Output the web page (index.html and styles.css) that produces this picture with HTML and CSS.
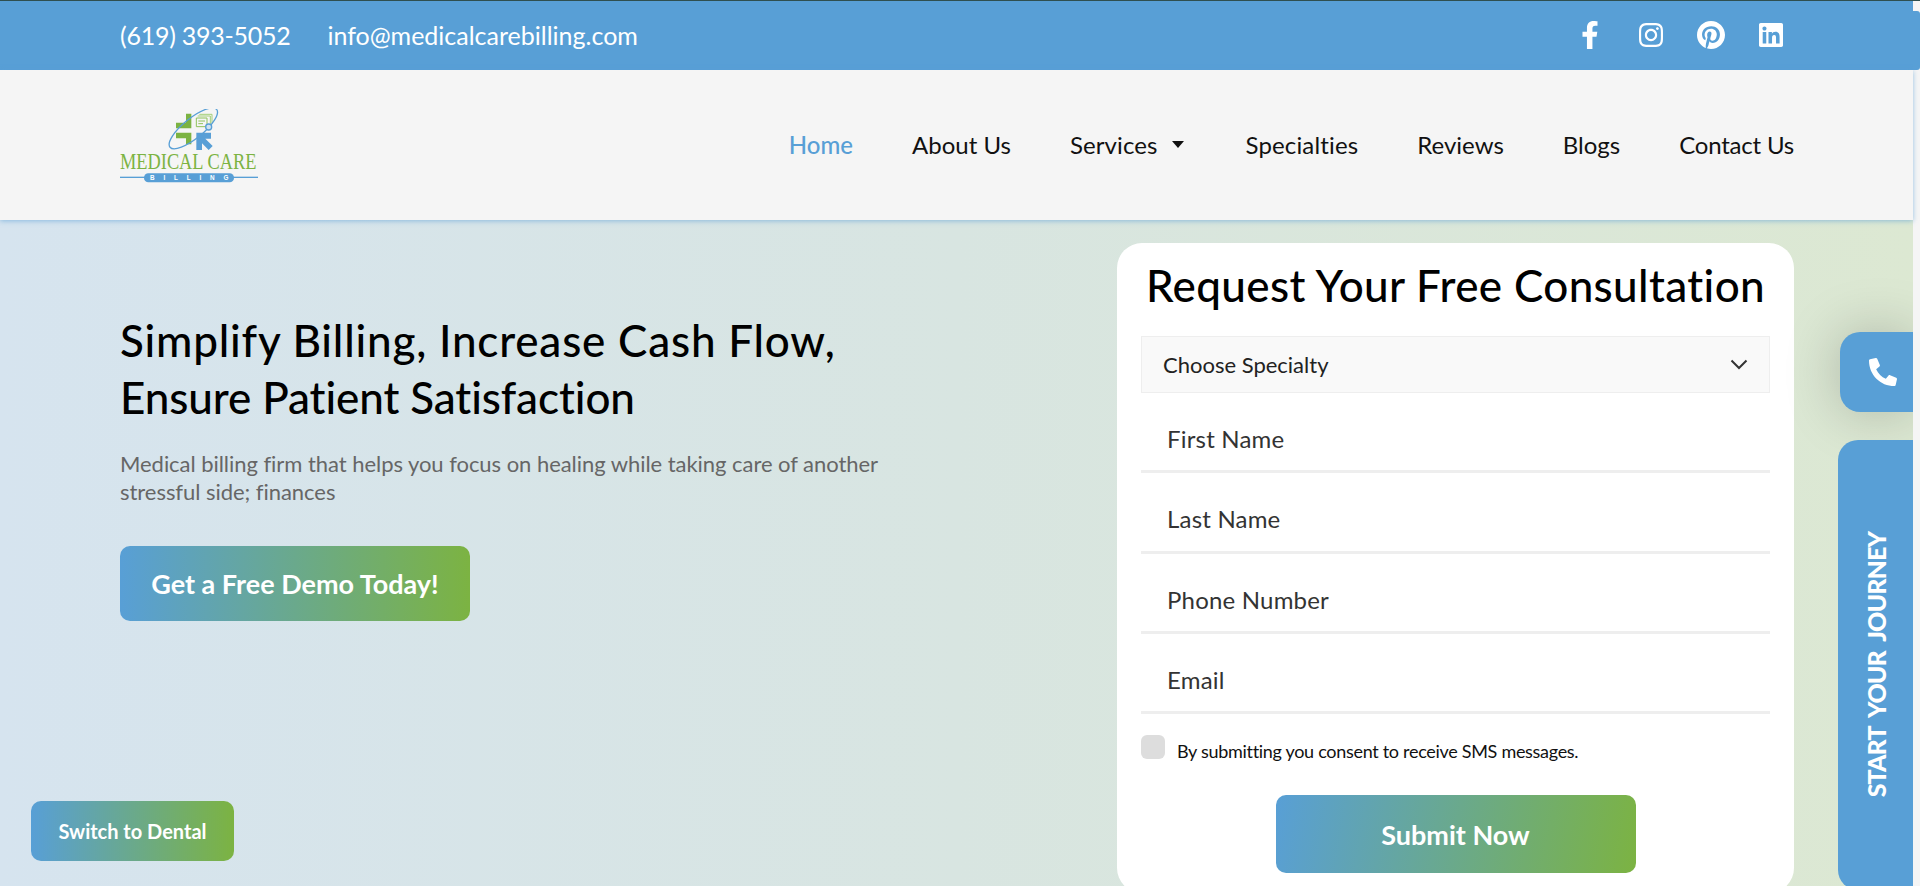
FILE: index.html
```html
<!DOCTYPE html>
<html lang="en">
<head>
    <meta charset="UTF-8">
    <meta name="viewport" content="width=device-width, initial-scale=1.0">
    <title>Medical Care Billing</title>
    <link rel="stylesheet" href="styles.css">
</head>
<body>
    <div class="page">
        <div class="topbar">
            <div class="contact">
                <a href="#" class="phone-link">(619) 393-5052</a>
                <a href="#">info@medicalcarebilling.com</a>
            </div>
            <div class="social">
                <svg class="icon-fb" viewBox="0 0 320 512"><path d="M279.14 288l14.22-92.66h-88.91v-60.13c0-25.35 12.42-50.06 52.24-50.06h40.42V6.26S260.43 0 225.36 0c-73.22 0-121.08 44.38-121.08 124.72v70.62H22.89V288h81.39v224h100.17V288z"/></svg>
                <svg class="icon-ig" viewBox="0 0 448 448"><path transform="translate(0 -32)" d="M224.1 141c-63.6 0-114.9 51.3-114.9 114.9s51.3 114.9 114.9 114.9S339 319.5 339 255.9 287.7 141 224.1 141zm0 189.6c-41.1 0-74.7-33.5-74.7-74.7s33.5-74.7 74.7-74.7 74.7 33.5 74.7 74.7-33.6 74.7-74.7 74.7zm146.4-194.3c0 14.9-12 26.8-26.8 26.8-14.9 0-26.8-12-26.8-26.8s12-26.8 26.8-26.8 26.8 12 26.8 26.8zm76.1 27.2c-1.7-35.9-9.9-67.7-36.2-93.9-26.2-26.2-58-34.4-93.9-36.2-37-2.1-147.9-2.1-184.9 0-35.8 1.7-67.6 9.9-93.9 36.1s-34.4 58-36.2 93.9c-2.1 37-2.1 147.9 0 184.9 1.7 35.9 9.9 67.7 36.2 93.9s58 34.4 93.9 36.2c37 2.1 147.9 2.1 184.9 0 35.9-1.7 67.7-9.9 93.9-36.2 26.2-26.2 34.4-58 36.2-93.9 2.1-37 2.1-147.8 0-184.8zM398.8 388c-7.8 19.6-22.9 34.7-42.6 42.6-29.5 11.7-99.5 9-132.1 9s-102.7 2.6-132.1-9c-19.6-7.8-34.7-22.9-42.6-42.6-11.7-29.5-9-99.5-9-132.1s-2.6-102.7 9-132.1c7.8-19.6 22.9-34.7 42.6-42.6 29.5-11.7 99.5-9 132.1-9s102.7-2.6 132.1 9c19.6 7.8 34.7 22.9 42.6 42.6 11.7 29.5 9 99.5 9 132.1s2.7 102.7-9 132.1z"/></svg>
                <svg class="icon-pin" viewBox="0 0 496 496"><path transform="translate(0 -8)" d="M496 256c0 137-111 248-248 248-25.6 0-50.2-3.9-73.4-11.1 10.1-16.5 25.2-43.5 30.8-65 3-11.6 15.4-59 15.4-59 8.1 15.4 31.7 28.5 56.8 28.5 74.8 0 128.7-68.8 128.7-154.3 0-81.9-66.9-143.2-152.9-143.2-107 0-163.9 71.8-163.9 150.1 0 36.4 19.4 81.7 50.3 96.1 4.7 2.2 7.2 1.2 8.3-3.3.8-3.4 5-20.3 6.9-28.1.6-2.5.3-4.7-1.7-7.1-10.1-12.5-18.3-35.3-18.3-56.6 0-54.7 41.4-107.6 112-107.6 60.9 0 103.6 41.5 103.6 100.9 0 67.1-33.9 113.6-78 113.6-24.3 0-42.6-20.1-36.7-44.8 7-29.5 20.5-61.3 20.5-82.6 0-19-10.2-34.9-31.4-34.9-24.9 0-44.9 25.7-44.9 60.2 0 22 7.4 36.8 7.4 36.8s-24.5 103.8-29 123.2c-5 21.4-3 51.6-.9 71.2C65.4 450.9 0 361.1 0 256 0 119 111 8 248 8s248 111 248 248z"/></svg>
                <svg class="icon-in" viewBox="0 0 448 448"><path transform="translate(0 -32)" d="M416 32H31.9C14.3 32 0 46.5 0 64.3v383.4C0 465.5 14.3 480 31.9 480H416c17.6 0 32-14.5 32-32.3V64.3c0-17.8-14.4-32.3-32-32.3zM135.4 416H69V202.2h66.5V416zm-33.2-243c-21.3 0-38.5-17.3-38.5-38.5S80.9 96 102.2 96c21.2 0 38.5 17.3 38.5 38.5 0 21.3-17.2 38.5-38.5 38.5zm282.1 243h-66.4V312c0-24.8-.5-56.7-34.5-56.7-34.6 0-39.9 27-39.9 54.9V416h-66.4V202.2h63.7v29.2h.9c8.9-16.8 30.6-34.5 62.9-34.5 67.2 0 79.7 44.3 79.7 101.9V416z"/></svg>
            </div>
        </div>

        <header class="header">
            <a href="#" class="logo">
                <svg viewBox="60 54 414 222" width="138" height="74">
                    <path d="M258 68h16v44h-46V95h30z" fill="#7cb342"/>
                    <path d="M228 125h46v35h-16v-18h-30z" fill="#7cb342"/>
                    <path d="M289 125h44v18h-17l22 22-12 12-20-20v20h-17z" fill="#589fd6"/>
                    <path d="M298 70h38v26M293 75h38v26" fill="none" stroke="#a5cf7a" stroke-width="3"/>
                    <path d="M289 81h32v26h-32zM295 90h20M295 98h14" fill="#f5f5f5" stroke="#8fc25a" stroke-width="3"/>
                    <ellipse cx="280" cy="112" rx="90" ry="30" transform="rotate(-39 280 112)" fill="none" stroke="#589fd6" stroke-width="4"/>
                    <circle cx="326" cy="108" r="9" fill="#cfe2f1" stroke="#589fd6" stroke-width="4"/>
                    <text transform="translate(60 235) scale(0.81 1)" class="logo-name">MEDICAL CARE</text>
                    <rect x="60" y="257" width="414" height="4" fill="#589fd6"/>
                    <rect x="132" y="247" width="270" height="27" rx="13" fill="#589fd6"/>
                    <text x="150" y="267" class="logo-sub">BILLING</text>
                </svg>
            </a>
            <nav class="nav">
                <a href="#" class="active">Home</a>
                <a href="#">About Us</a>
                <a href="#" class="has-caret">Services <span class="caret"></span></a>
                <a href="#" class="nav-wide">Specialties</a>
                <a href="#">Reviews</a>
                <a href="#">Blogs</a>
                <a href="#" class="nav-last">Contact Us</a>
            </nav>
        </header>

        <main class="hero">
            <section class="intro">
                <h1><span class="line-one">Simplify Billing, Increase Cash Flow,</span><span class="line-two">Ensure Patient Satisfaction</span></h1>
                <p>Medical billing firm that helps you focus on healing while taking care of another stressful side; finances</p>
                <a href="#" class="btn btn-demo">Get a Free Demo Today!</a>
            </section>

            <form class="card">
                <h2>Request Your Free Consultation</h2>
                <div class="select-wrap">
                    <select>
                        <option>Choose Specialty</option>
                    </select>
                    <svg viewBox="0 0 18 11" width="18" height="11"><path d="M1.5 1.5 9 9l7.5-7.5" fill="none" stroke="#333" stroke-width="2"/></svg>
                </div>
                <input type="text" placeholder="First Name">
                <input type="text" placeholder="Last Name">
                <input type="text" placeholder="Phone Number">
                <input type="email" placeholder="Email">
                <label class="consent">
                    <input type="checkbox">
                    <span>By submitting you consent to receive SMS messages.</span>
                </label>
                <button type="button" class="btn btn-submit">Submit Now</button>
            </form>
        </main>
    </div>

    <div class="top-line"></div>
    <div class="edge-strip"></div>
    <a href="#" class="btn btn-switch">Switch to Dental</a>
    <a href="#" class="side-phone">
        <svg viewBox="0 0 512 512" width="28" height="28"><path transform="matrix(-1 0 0 1 512 0)" d="M493.4 24.6l-104-24c-11.3-2.6-22.9 3.3-27.5 13.9l-48 112c-4.2 9.8-1.4 21.3 6.9 28l60.6 49.6c-36 76.7-98.9 140.5-177.2 177.2l-49.6-60.6c-6.8-8.3-18.2-11.1-28-6.9l-112 48C3.9 366.5-2 378.1.6 389.4l24 104C27.1 504.2 36.7 512 48 512c256.1 0 464-207.5 464-464 0-11.2-7.7-20.9-18.6-23.4z"/></svg>
    </a>
    <a href="#" class="side-journey"><span>START YOUR JOURNEY</span></a>
</body>
</html>
```

FILE: styles.css
```css
* {
    box-sizing: border-box;
}
html, body {
    margin: 0;
    height: 100%;
    overflow: hidden;
}
body {
    font-family: Lato, "Open Sans", sans-serif;
    background-color: #f5f5f5;
    color: #111;
}
a {
    color: inherit;
    text-decoration: none;
}
.page {
    width: 1913px;
    height: 886px;
    display: flex;
    flex-direction: column;
}

/* top bar */
.topbar {
    height: 70px;
    flex: none;
    background-color: #589fd6;
    padding: 0 130px 0 120px;
    display: flex;
    align-items: center;
    justify-content: space-between;
    color: #fff;
}
.contact {
    display: flex;
    gap: 37px;
    font-size: 25px;
}
.phone-link {
    letter-spacing: -0.26px;
}
.social {
    display: flex;
    align-items: center;
    gap: 34px;
}
.social svg {
    fill: #fff;
    display: block;
}
.icon-fb {
    width: 18px;
    height: 28px;
    margin-right: 6px;
}
.icon-ig {
    width: 24px;
    height: 24px;
}
.icon-pin {
    width: 28px;
    height: 28px;
}
.icon-in {
    width: 24px;
    height: 24px;
}

/* header */
.header {
    height: 150px;
    flex: none;
    background-color: #f5f5f5;
    padding: 0 119px 0 120px;
    display: flex;
    align-items: center;
    justify-content: space-between;
    box-shadow: 0 1px 5px rgba(88, 159, 214, 0.6);
    position: relative;
}
.logo svg {
    display: block;
    margin-top: 2px;
}
.logo-name {
    font-family: "Liberation Serif", serif;
    font-size: 68px;
    fill: #7cb342;
}
.logo-sub {
    font-family: "Liberation Sans", sans-serif;
    font-size: 19px;
    font-weight: 700;
    letter-spacing: 26.5px;
    fill: #fff;
}
.nav {
    display: flex;
    align-items: center;
    gap: 59px;
    padding-bottom: 2px;
    font-size: 24px;
    color: #111;
}
.nav .active {
    color: #589fd6;
    font-weight: 500;
}
.nav-wide {
    letter-spacing: 0.15px;
}
.nav-last {
    letter-spacing: -0.2px;
}
.has-caret {
    display: flex;
    align-items: center;
    gap: 15px;
    margin-right: 2px;
    letter-spacing: 0.1px;
}
.caret {
    width: 0;
    height: 0;
    border-left: 6px solid transparent;
    border-right: 6px solid transparent;
    border-top: 7px solid #111;
}

/* hero */
.hero {
    flex: 1;
    min-height: 0;
    overflow: hidden;
    padding: 0 119px 0 120px;
    display: flex;
    justify-content: space-between;
    align-items: flex-start;
    background: linear-gradient(90deg, #d6e4ef 0%, #d8e5e1 50%, #dce8d2 100%);
}
.intro {
    width: 790px;
    padding-top: 92px;
}
.intro h1 {
    margin: 0;
    font-size: 44px;
    line-height: 57px;
    font-weight: 500;
    color: #000;
}
.line-one,
.line-two {
    display: block;
}
.line-one {
    letter-spacing: 0.8px;
}
.line-two {
    letter-spacing: -0.1px;
}
.intro p {
    margin: 24px 0 40px;
    font-size: 22px;
    line-height: 28px;
    letter-spacing: -0.045px;
    color: #666;
}
.btn {
    display: flex;
    align-items: center;
    justify-content: center;
    border: none;
    border-radius: 10px;
    color: #fff;
    background: linear-gradient(90deg, #589fd6, #7cb342);
    font-family: inherit;
    font-weight: 700;
}
.btn-demo {
    width: 350px;
    height: 75px;
    font-size: 27px;
}

/* form card */
.card {
    width: 677px;
    flex: none;
    margin-top: 23px;
    padding: 14px 24px 20px;
    background-color: #fff;
    border-radius: 25px;
}
.card h2 {
    margin: 0 0 23px;
    text-align: center;
    font-size: 44px;
    line-height: 56px;
    font-weight: 500;
    letter-spacing: 0.37px;
    color: #000;
}
.select-wrap {
    position: relative;
}
.select-wrap select {
    width: 100%;
    height: 57px;
    padding: 0 21px;
    appearance: none;
    border: 1px solid #eee;
    border-radius: 0;
    background-color: #f9f9f9;
    font-family: inherit;
    font-size: 22px;
    color: #222;
}
.select-wrap svg {
    position: absolute;
    right: 22px;
    top: 23px;
}
.card input[type="text"],
.card input[type="email"] {
    display: block;
    width: 100%;
    height: 80.33px;
    padding: 14px 26px 0;
    border: none;
    border-bottom: 3px solid #eee;
    font-family: inherit;
    font-size: 24px;
    letter-spacing: 0.2px;
    outline: none;
}
.card input::placeholder {
    color: #333;
    opacity: 1;
}
.consent {
    display: flex;
    gap: 12px;
    margin-top: 21px;
    font-size: 18px;
    line-height: 24px;
    letter-spacing: -0.3px;
    color: #111;
}
.consent input {
    appearance: none;
    width: 24px;
    height: 24px;
    margin: 0;
    background-color: #ddd;
    border-radius: 6px;
}
.consent span {
    padding-top: 4px;
}
.btn-submit {
    width: 360px;
    height: 78px;
    margin: 32px auto 0;
    font-size: 27px;
    background: linear-gradient(100deg, #589fd6, #7cb342);
}

/* things over the page */
.top-line {
    position: fixed;
    top: 0;
    left: 0;
    right: 0;
    height: 1px;
    background-color: #2f4f4f;
}
.edge-strip {
    position: fixed;
    top: 11px;
    right: 0;
    width: 7px;
    height: 59px;
    background-color: #589fd6;
    border-radius: 0 3px 3px 0;
}
.btn-switch {
    position: fixed;
    left: 31px;
    top: 801px;
    width: 203px;
    height: 60px;
    font-size: 20px;
}
.side-phone {
    position: fixed;
    top: 332px;
    right: 7px;
    width: 73px;
    height: 80px;
    padding-left: 29px;
    display: flex;
    align-items: center;
    background-color: #589fd6;
    border-radius: 20px 0 0 20px;
    box-shadow: 0 0 55px rgba(0, 0, 0, 0.22);
    clip-path: inset(-90px 0 -90px -90px);
}
.side-phone svg {
    fill: #fff;
}
.side-journey {
    position: fixed;
    top: 440px;
    right: 7px;
    width: 75px;
    height: 450px;
    display: flex;
    align-items: center;
    justify-content: center;
    background-color: #589fd6;
    border-radius: 20px 0 0 20px;
    color: #fff;
    font-family: Lato, sans-serif;
    font-size: 25px;
    font-weight: 900;
    letter-spacing: -0.9px;
    word-spacing: 5px;
}
.side-journey span {
    writing-mode: vertical-rl;
    transform: rotate(180deg);
    white-space: nowrap;
}
```
